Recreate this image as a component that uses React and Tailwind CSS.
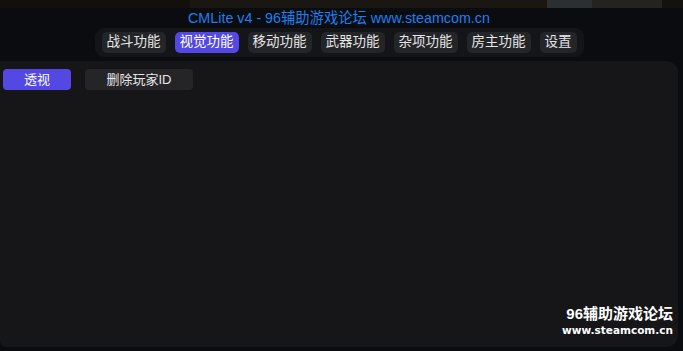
const tabs = ['战斗功能', '视觉功能', '移动功能', '武器功能', '杂项功能', '房主功能', '设置']

export default function App() {
  return (
    <div className="relative flex h-[351px] w-[683px] flex-col overflow-hidden bg-[#0b0c0f] font-['Liberation_Sans','Noto_Sans_CJK_SC',sans-serif]">
      {/* game scene behind the overlay */}
      <div className="flex h-[8px] w-full bg-[#17130f]">
        <div className="w-[190px] bg-[#120f0c]" />
        <div className="w-[357px] bg-[#1a1611]" />
        <div className="w-[45px] bg-[#2c2f2f]" />
        <div className="w-[70px] bg-[#25231f]" />
        <div className="flex-1 bg-[#14120f]" />
      </div>

      <div className="pr-[5px] text-center text-[14.3px] leading-[20px] text-[#1f7fef]">CMLite v4 - 96辅助游戏论坛 www.steamcom.cn</div>

      <div className="flex justify-center pr-[5px]">
        <div className="flex h-[29px] items-center gap-[9px] rounded-[9px] bg-[#141518] px-[7px]">
          {tabs.map((t, i) => (
            <div
              key={t}
              className={`flex h-[21px] items-center justify-center rounded-[5px] text-[13.5px] text-[#e6e6e6] ${
                t === '设置' ? 'w-[37px]' : 'w-[64px]'
              } ${i === 1 ? 'bg-[#5348e3] text-white' : 'bg-[#242528]'}`}
            >
              {t}
            </div>
          ))}
        </div>
      </div>

      <div className="relative mt-[4px] h-[286px] w-[678px] rounded-tr-[12px] rounded-br-[12px] rounded-bl-[6px] bg-[#161618] pl-[3px] pt-[8px]">
        <div className="flex gap-[14px]">
          <div className="flex h-[21px] w-[68px] items-center justify-center rounded-[4px] bg-[#5348e3] text-[13px] text-white">透视</div>
          <div className="flex h-[21px] w-[108px] items-center justify-center rounded-[4px] bg-[#252528] text-[13px] text-[#e6e6e6]">删除玩家ID</div>
        </div>

        <div className="absolute bottom-[10px] right-[5px] text-right font-bold text-white">
          <div className="text-[15px] leading-[18px]">96辅助游戏论坛</div>
          <div className="text-[10.5px] leading-[14px] font-['DejaVu_Sans',sans-serif]">www.steamcom.cn</div>
        </div>
      </div>
    </div>
  )
}
